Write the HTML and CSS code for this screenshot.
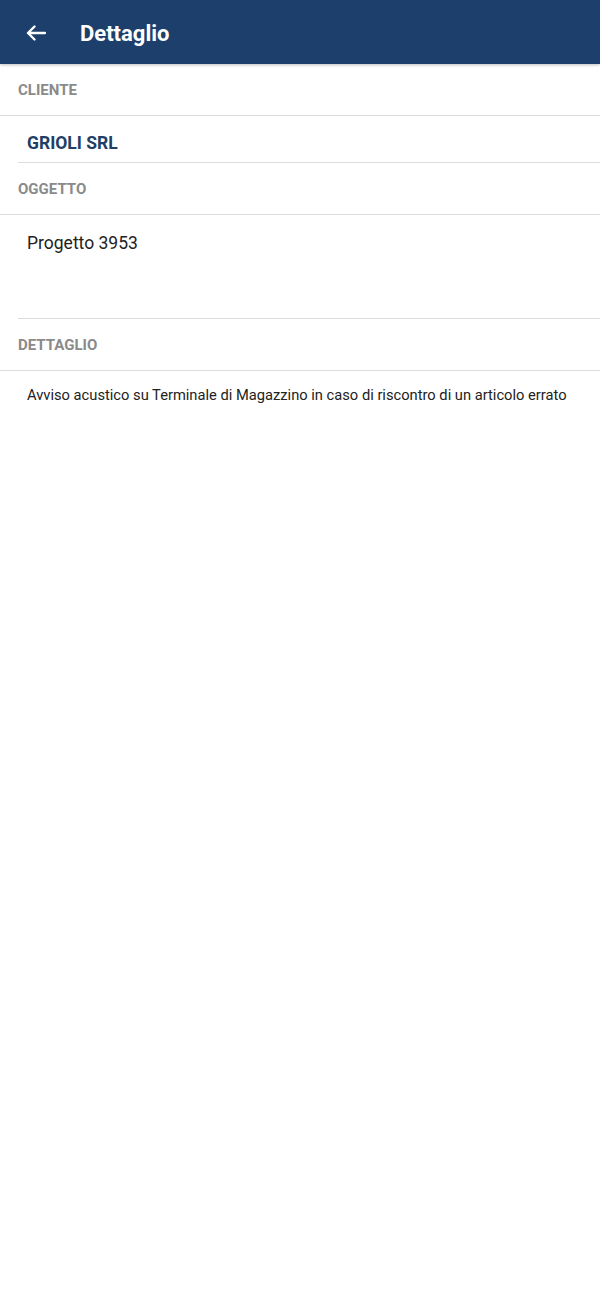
FILE: index.html
```html
<!DOCTYPE html>
<html lang="it">
<head>
<meta charset="utf-8">
<title>Dettaglio</title>
<link rel="stylesheet" href="styles.css">
</head>
<body>
<header class="appbar">
  <span class="back" aria-label="Indietro">
    <svg width="20" height="16" viewBox="0 0 20 16"><path d="M19 8H2.5M8.5 1.5L2 8l6.5 6.5" fill="none" stroke="#fff" stroke-width="2.4" stroke-linecap="round" stroke-linejoin="round"/></svg>
  </span>
  <h1 class="title">Dettaglio</h1>
</header>
<main class="content">
  <div class="label">CLIENTE</div>
  <div class="value value-client">GRIOLI SRL</div>
  <div class="label">OGGETTO</div>
  <div class="value value-object">Progetto 3953</div>
  <div class="label">DETTAGLIO</div>
  <div class="detail">Avviso acustico su Terminale di Magazzino in caso di riscontro di un articolo errato</div>
</main>
</body>
</html>
```
FILE: styles.css
```css
html, body {
  margin: 0;
  padding: 0;
  background: #fff;
  font-family: Roboto, "Noto Sans", "Liberation Sans", sans-serif;
}
.appbar {
  height: 64px;
  background: #1c406b;
  display: flex;
  align-items: center;
  box-shadow: 0 1px 3px rgba(0,0,0,0.25);
  position: relative;
  z-index: 1;
}
.back {
  display: flex;
  margin-left: 26px;
  margin-top: 2px;
}
.title {
  margin: 2px 0 0 34px;
  color: #fff;
  font-size: 22px;
  font-weight: 700;
}
.content {
  display: flex;
  flex-direction: column;
}
.label {
  height: 52px;
  display: flex;
  align-items: center;
  padding-left: 18px;
  font-size: 15px;
  font-weight: 700;
  color: #8a8a8a;
  border-bottom: 1px solid #dcdcdc;
  box-sizing: border-box;
}
.value {
  margin-left: 18px;
  padding-left: 9px;
  border-bottom: 1px solid #dcdcdc;
  box-sizing: border-box;
}
.value-client {
  height: 47px;
  padding-top: 17px;
  line-height: 20px;
  font-size: 17.5px;
  font-weight: 700;
  color: #1f3f66;
}
.value-object {
  height: 104px;
  padding-top: 18px;
  line-height: 20px;
  font-size: 17.5px;
  color: #222;
}
.detail {
  padding: 14px 0 0 27px;
  line-height: 20px;
  font-size: 14.7px;
  color: #222;
}
```
